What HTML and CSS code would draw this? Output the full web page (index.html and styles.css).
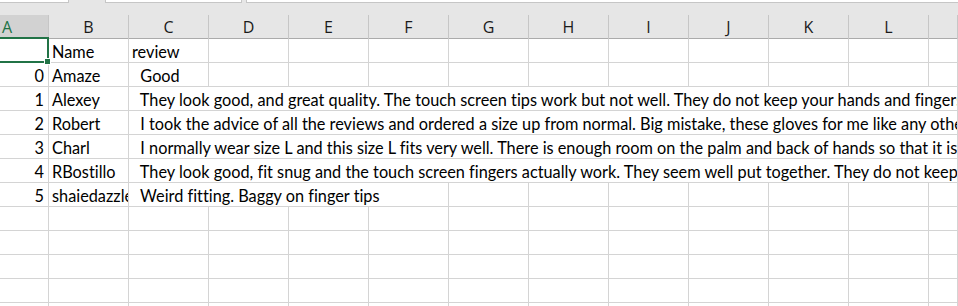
FILE: index.html
```html
<!DOCTYPE html>
<html>
<head>
<meta charset="utf-8">
<link rel="stylesheet" href="styles.css">
</head>
<body>
<div class="tabs">
  <div class="tab t1"></div>
  <div class="tabgap g1"></div>
  <div class="tab t2"></div>
  <div class="tabgap g2"></div>
  <div class="tab t3"></div>
</div>
<div class="topgap"></div>
<div class="colhead">
  <div class="hc sel-col">A</div>
  <div class="hc">B</div>
  <div class="hc">C</div>
  <div class="hc">D</div>
  <div class="hc">E</div>
  <div class="hc">F</div>
  <div class="hc">G</div>
  <div class="hc">H</div>
  <div class="hc">I</div>
  <div class="hc">J</div>
  <div class="hc">K</div>
  <div class="hc">L</div>
  <div class="hc"></div>
</div>
<div class="grid">
  <!-- row 1 -->
  <div class="c sel"></div>
  <div class="c">Name</div>
  <div class="c">review</div>
  <div class="c"></div><div class="c"></div><div class="c"></div><div class="c"></div><div class="c"></div><div class="c"></div><div class="c"></div><div class="c"></div><div class="c"></div><div class="c"></div>
  <!-- row 2 -->
  <div class="c num">0</div>
  <div class="c">Amaze</div>
  <div class="c">  Good</div>
  <div class="c"></div><div class="c"></div><div class="c"></div><div class="c"></div><div class="c"></div><div class="c"></div><div class="c"></div><div class="c"></div><div class="c"></div><div class="c"></div>
  <!-- row 3 -->
  <div class="c num">1</div>
  <div class="c">Alexey</div>
  <div class="c span-all">  They look good, and great quality. The touch screen tips work but not well. They do not keep your hands and fingers warm.</div>
  <!-- row 4 -->
  <div class="c num">2</div>
  <div class="c">Robert</div>
  <div class="c span-all">  I took the advice of all the reviews and ordered a size up from normal. Big mistake, these gloves for me like any other</div>
  <!-- row 5 -->
  <div class="c num">3</div>
  <div class="c">Charl</div>
  <div class="c span-all">  I normally wear size L and this size L fits very well. There is enough room on the palm and back of hands so that it is</div>
  <!-- row 6 -->
  <div class="c num">4</div>
  <div class="c">RBostillo</div>
  <div class="c span-all">  They look good, fit snug and the touch screen fingers actually work. They seem well put together. They do not keep</div>
  <!-- row 7 -->
  <div class="c num">5</div>
  <div class="c">shaiedazzle</div>
  <div class="c span4">  Weird fitting. Baggy on finger tips</div>
  <div class="c"></div><div class="c"></div><div class="c"></div><div class="c"></div><div class="c"></div><div class="c"></div><div class="c"></div>
  <!-- empty rows -->
  <div class="c"></div><div class="c"></div><div class="c"></div><div class="c"></div><div class="c"></div><div class="c"></div><div class="c"></div><div class="c"></div><div class="c"></div><div class="c"></div><div class="c"></div><div class="c"></div><div class="c"></div>
  <div class="c"></div><div class="c"></div><div class="c"></div><div class="c"></div><div class="c"></div><div class="c"></div><div class="c"></div><div class="c"></div><div class="c"></div><div class="c"></div><div class="c"></div><div class="c"></div><div class="c"></div>
  <div class="c"></div><div class="c"></div><div class="c"></div><div class="c"></div><div class="c"></div><div class="c"></div><div class="c"></div><div class="c"></div><div class="c"></div><div class="c"></div><div class="c"></div><div class="c"></div><div class="c"></div>
  <div class="c"></div><div class="c"></div><div class="c"></div><div class="c"></div><div class="c"></div><div class="c"></div><div class="c"></div><div class="c"></div><div class="c"></div><div class="c"></div><div class="c"></div><div class="c"></div><div class="c"></div>
  <div class="c"></div><div class="c"></div><div class="c"></div><div class="c"></div><div class="c"></div><div class="c"></div><div class="c"></div><div class="c"></div><div class="c"></div><div class="c"></div><div class="c"></div><div class="c"></div><div class="c"></div>
</div>
</body>
</html>
```
FILE: styles.css
```css
html, body {
  margin: 0;
  padding: 0;
}
body {
  width: 958px;
  height: 306px;
  overflow: hidden;
  background: #ffffff;
  font-family: "Lato", "Liberation Sans", sans-serif;
}
.tabs {
  display: flex;
  height: 3px;
  background: #e6e6e6;
}
.tab {
  box-sizing: border-box;
  height: 3px;
  background: #ffffff;
  border: 1px solid #c6c6c6;
  border-top: none;
}
.t1 { width: 69px; border-left: none; }
.g1 { width: 36px; }
.t2 { width: 137px; }
.g2 { width: 4px; }
.t3 { flex: 1; border-right: none; }
.topgap {
  height: 12px;
  background: #e6e6e6;
}
.colhead {
  display: grid;
  grid-template-columns: 49px repeat(11, 80px) 1fr;
  height: 24px;
  box-sizing: border-box;
  background: #e6e6e6;
  border-bottom: 1px solid #ababab;
}
.hc {
  box-sizing: border-box;
  border-right: 1px solid #c6c6c6;
  font-family: "Open Sans", "Noto Sans", sans-serif;
  font-size: 16px;
  line-height: 24px;
  color: #1a1a1a;
  text-align: center;
}
.hc.sel-col {
  background: #d2d2d2;
  color: #217346;
  text-align: left;
  padding-left: 2px;
}
.grid {
  display: grid;
  grid-template-columns: 49px repeat(11, 80px) 1fr;
  grid-auto-rows: 24px;
}
.c {
  box-sizing: border-box;
  border-right: 1px solid #d4d4d4;
  border-bottom: 1px solid #d4d4d4;
  overflow: hidden;
  white-space: pre;
  font-size: 16.3px;
  font-variant-ligatures: none;
  color: #000000;
  padding: 0 3px 2px 3px;
  display: flex;
  align-items: flex-end;
  line-height: 17px;
}
.num {
  justify-content: flex-end;
  padding-right: 4px;
}
.span-all {
  grid-column: 3 / -1;
}
.span4 {
  grid-column: span 4;
}
.sel {
  position: relative;
  overflow: visible;
  z-index: 2;
}
.sel::after {
  content: "";
  position: absolute;
  left: -3px;
  top: -2px;
  right: -1px;
  bottom: -1px;
  border: 2px solid #217346;
}
.sel::before {
  content: "";
  position: absolute;
  right: -3px;
  bottom: -3px;
  width: 5px;
  height: 5px;
  background: #217346;
  border: 1px solid #ffffff;
  z-index: 3;
}
```
